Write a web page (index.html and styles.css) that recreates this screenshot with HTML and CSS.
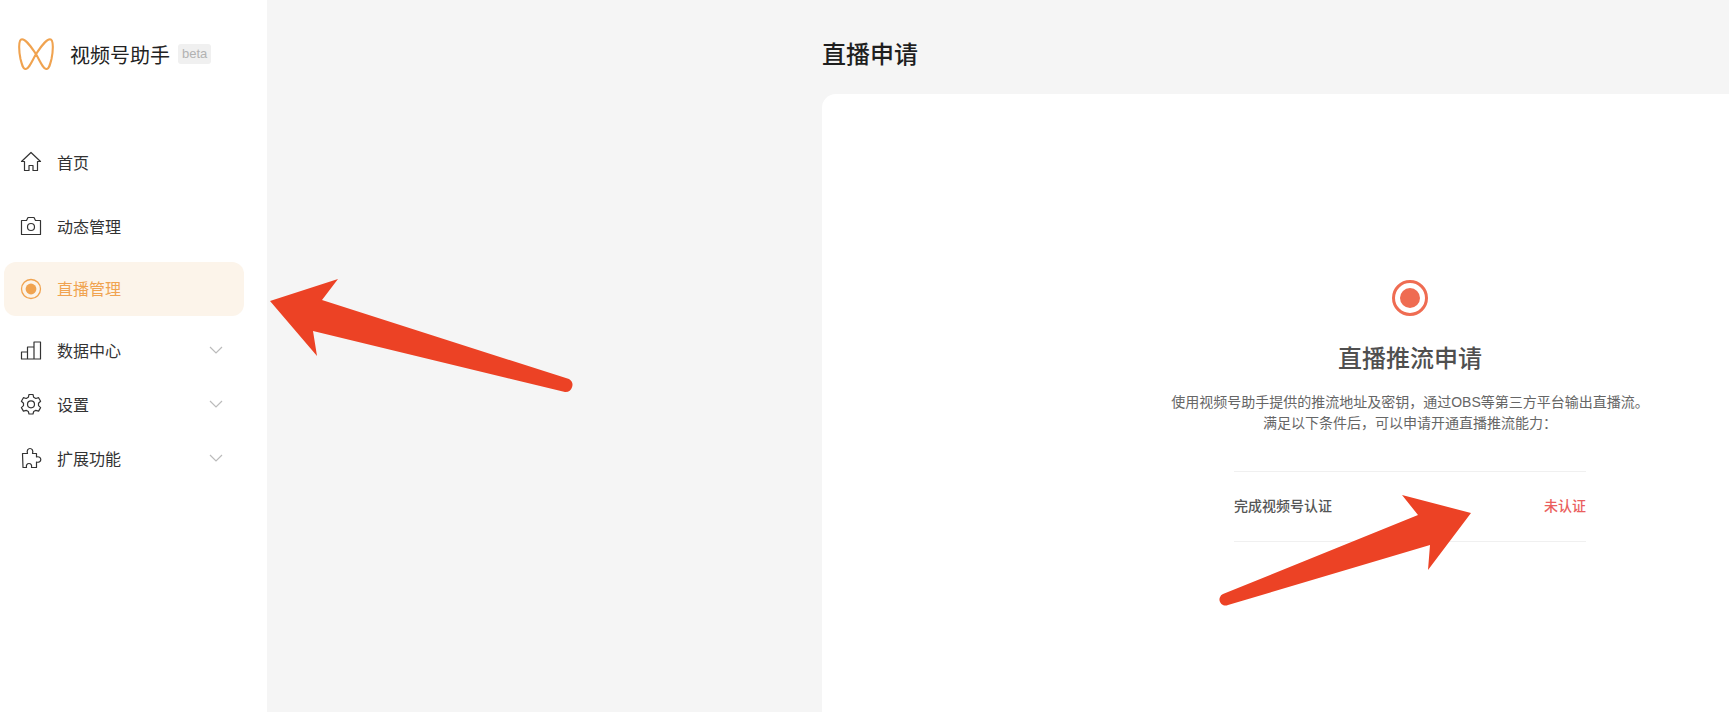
FILE: index.html
```html
<!DOCTYPE html>
<html lang="zh-CN">
<head>
  <meta charset="UTF-8">
  <meta name="viewport" content="width=device-width, initial-scale=1.0">
  <title>视频号助手</title>
  <link rel="stylesheet" href="styles.css">
</head>
<body>
  <aside class="sidebar">
    <div class="brand">
      <svg class="brand-logo" viewBox="0 0 36 32" fill="none" stroke="#f0a350" stroke-width="2.100">
        <path d="M4 1.200C8 1.200 13 9 18 16C22 23 25 31 28.500 31C31 31 32 27 33.500 21C35 14 36 1.200 32 1.200C28 1.200 23 9 18 16C14 23 11 31 7.500 31C5 31 4 27 2.500 21C1 14 0 1.200 4 1.200Z"/>
      </svg>
      <span class="brand-name">视频号助手</span>
      <span class="brand-tag">beta</span>
    </div>

    <nav class="nav">
      <a class="nav-item nav-first">
        <svg class="nav-icon" viewBox="0 0 22 22" fill="none" stroke="currentColor" stroke-width="1.200" stroke-linejoin="round">
          <path d="M1.500 10.500L11 1.500L20.500 10.500H17.500V19.500H13V14.500H9V19.500H4.500V10.500Z"/>
        </svg>
        <span>首页</span>
      </a>
      <a class="nav-item nav-second">
        <svg class="nav-icon" viewBox="0 0 22 22" fill="none" stroke="currentColor" stroke-width="1.200" stroke-linejoin="round">
          <path d="M1.500 5.500H6.500L8 2.500H14L15.500 5.500H20.500V19.500H1.500Z"/>
          <circle cx="11" cy="12" r="3.500"/>
        </svg>
        <span>动态管理</span>
      </a>
      <a class="nav-item active">
        <svg class="nav-icon" viewBox="0 0 22 22" fill="none" stroke="currentColor">
          <circle cx="11" cy="11" r="9.500" stroke-width="1.300"/>
          <circle cx="11" cy="11" r="5.400" fill="currentColor" stroke="none"/>
        </svg>
        <span class="active-label">直播管理</span>
      </a>
      <a class="nav-item">
        <svg class="nav-icon" viewBox="0 0 22 22" fill="none" stroke="currentColor" stroke-width="1.200" stroke-linejoin="round">
          <path d="M1.500 20V13H7.500V20ZM7.500 20V8H14V20ZM14 20V3H20.500V20ZM1.500 20H20.500"/>
        </svg>
        <span>数据中心</span>
        <svg class="nav-arrow" viewBox="0 0 14 8" fill="none" stroke="currentColor" stroke-width="1.200"><path d="M1 1L7 7L13 1"/></svg>
      </a>
      <a class="nav-item">
        <svg class="nav-icon" viewBox="0 0 22 22" fill="none" stroke="currentColor" stroke-width="1.200" stroke-linejoin="round">
          <path d="M9 1.500H13L13.700 4.300L15.800 5.500L18.600 4.700L20.600 8.200L18.500 10.200V12.600L20.600 14.600L18.600 18.100L15.800 17.300L13.700 18.500L13 21H9L8.300 18.500L6.200 17.300L3.400 18.100L1.400 14.600L3.500 12.600V10.200L1.400 8.200L3.400 4.700L6.200 5.500L8.300 4.300Z"/>
          <circle cx="11" cy="11.300" r="3.500"/>
        </svg>
        <span>设置</span>
        <svg class="nav-arrow" viewBox="0 0 14 8" fill="none" stroke="currentColor" stroke-width="1.200"><path d="M1 1L7 7L13 1"/></svg>
      </a>
      <a class="nav-item">
        <svg class="nav-icon" viewBox="0 0 22 22" fill="none" stroke="currentColor" stroke-width="1.200" stroke-linejoin="round">
          <path d="M2.500 6.500H7.500C6.500 3.500 8 1.500 10 1.500C12 1.500 13.500 3.500 12.500 6.500H16.500V10C19 9.200 20.800 10.500 20.800 12.500C20.800 14.500 19 15.800 16.500 15V20.500H11.500C12 18 11 16.500 9 16.500C7 16.500 6 18 6.500 20.500H3L2.500 6.500Z"/>
        </svg>
        <span>扩展功能</span>
        <svg class="nav-arrow" viewBox="0 0 14 8" fill="none" stroke="currentColor" stroke-width="1.200"><path d="M1 1L7 7L13 1"/></svg>
      </a>
    </nav>
  </aside>

  <main class="main">
    <h1 class="page-title">直播申请</h1>
    <section class="card">
      <svg class="live-icon" viewBox="0 0 36 36">
        <circle cx="18" cy="18" r="16.500" fill="none" stroke="#ef6c52" stroke-width="3"/>
        <circle cx="18" cy="18" r="10" fill="#ef6c52"/>
      </svg>
      <h2 class="card-title">直播推流申请</h2>
      <p class="card-desc">使用视频号助手提供的推流地址及密钥，通过OBS等第三方平台输出直播流。<br>满足以下条件后，可以申请开通直播推流能力：</p>
      <div class="cond-row">
        <span class="cond-name">完成视频号认证</span>
        <span class="cond-status">未认证</span>
      </div>
    </section>
  </main>

  <!-- annotation arrows drawn over the screenshot -->
  <svg class="arrows" width="1729" height="712" viewBox="0 0 1729 712">
    <path fill="#ec4225" d="M270 301L338 279L322 300L569 379A7 7 0 0 1 565 392L313 331L317 356Z"/>
    <path fill="#ec4225" d="M1471 513L1402 495L1418 515L1223 594A6 6 0 0 0 1228 605L1430 545L1428 570Z"/>
  </svg>
</body>
</html>
```

FILE: styles.css
```css
* {
  box-sizing: border-box;
}
html, body {
  height: 100%;
}
body {
  font-family: "Liberation Sans", "Noto Sans CJK SC", sans-serif;
  display: flex;
  margin: 0;
  background: #f5f5f5;
  color: #333;
  overflow: hidden;
}
.sidebar {
  flex: none;
  width: 267px;
  background: #fff;
}
.brand {
  display: flex;
  align-items: center;
  height: 32px;
  margin-top: 38px;
  padding-left: 18px;
}
.brand-logo {
  width: 36px;
  height: 32px;
  margin-right: 16px;
}
.brand-name {
  font-size: 20px;
  color: #222;
  margin-right: 8px;
}
.brand-tag {
  font-size: 13px;
  line-height: 20px;
  padding: 0 4px;
  color: #b2b2b2;
  background: #f0f0f0;
  border-radius: 3px;
}
.nav {
  margin-top: 65px;
}
.nav-item {
  display: flex;
  align-items: center;
  height: 54px;
  width: 240px;
  margin-left: 4px;
  padding: 0 21px 0 16px;
  font-size: 16px;
  color: #333;
  border-radius: 12px;
}
.nav-first {
  margin-bottom: 10px;
}
.nav-second {
  margin-bottom: 9px;
}
.nav-item.active {
  margin-bottom: 7px;
  color: #f0a350;
  background: #fcf4ea;
}
.active-label {
  margin-top: -2px;
}
.nav-icon {
  flex: none;
  width: 22px;
  height: 22px;
  margin-right: 15px;
}
.nav-arrow {
  width: 14px;
  height: 8px;
  margin-left: auto;
  color: #bbb;
}
.main {
  flex: none;
  padding-left: 555px;
}
.page-title {
  margin: 0;
  height: 94px;
  padding-top: 37px;
  font-size: 24px;
  line-height: 36px;
  font-weight: 500;
  color: #1f1f1f;
}
.card {
  display: flex;
  flex-direction: column;
  align-items: center;
  width: 1176px;
  height: 800px;
  padding-top: 186px;
  background: #fff;
  border-radius: 14px;
}
.live-icon {
  width: 36px;
  height: 36px;
}
.card-title {
  margin: 25px 0 0;
  font-size: 24px;
  line-height: 36px;
  font-weight: 500;
  color: #4f4f4f;
}
.card-desc {
  margin: 15px 0 0;
  font-size: 14px;
  line-height: 21px;
  text-align: center;
  color: #666;
}
.cond-row {
  display: flex;
  justify-content: space-between;
  align-items: center;
  width: 352px;
  height: 71px;
  margin-top: 37px;
  padding-bottom: 4px;
  font-size: 14px;
  font-weight: 500;
  border-top: 1px solid #f0f0f0;
  border-bottom: 1px solid #f0f0f0;
}
.cond-name {
  color: #555;
}
.cond-status {
  color: #ea5f60;
}
.arrows {
  position: absolute;
  left: 0;
  top: 0;
  pointer-events: none;
}
```
